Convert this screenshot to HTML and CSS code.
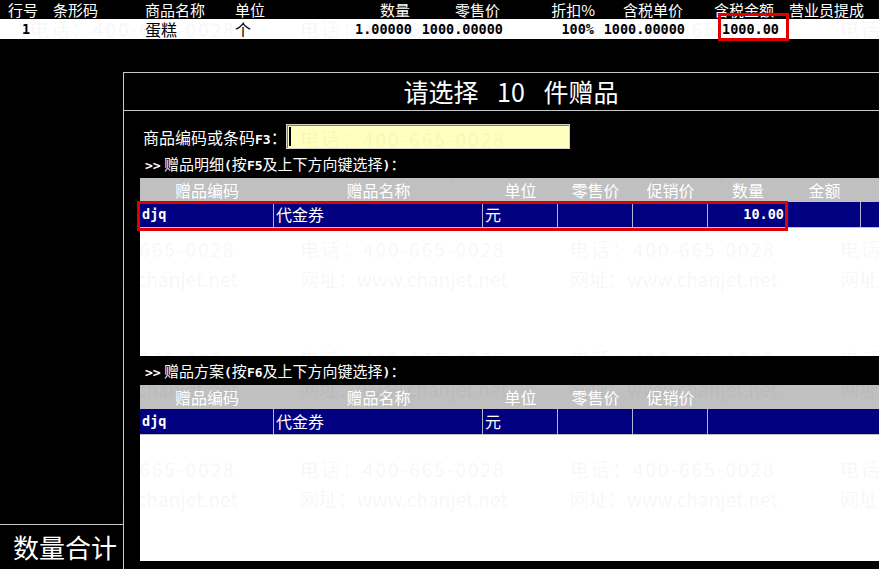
FILE: index.html
```html
<!DOCTYPE html>
<html lang="zh-CN">
<head>
    <meta charset="UTF-8"/>
    <meta name="viewport" content="width=device-width, initial-scale=1.0"/>
    <title>赠品选择</title>
    <link rel="stylesheet" href="styles.css">
</head>
<body>
    <div class="bill">
        <div class="bill-row bill-head">
            <span class="c-no">行号</span>
            <span class="c-code">条形码</span>
            <span class="c-name">商品名称</span>
            <span class="c-unit">单位</span>
            <span class="c-qty">数量</span>
            <span class="c-price">零售价</span>
            <span class="c-disc">折扣%</span>
            <span class="c-tax">含税单价</span>
            <span class="c-sum">含税金额</span>
            <span class="c-staff">营业员提成</span>
        </div>
        <div class="bill-row bill-line">
            <span class="c-no num">1</span>
            <span class="c-code"></span>
            <span class="c-name">蛋糕</span>
            <span class="c-unit">个</span>
            <span class="c-qty num">1.00000</span>
            <span class="c-price num">1000.00000</span>
            <span class="c-disc num">100%</span>
            <span class="c-tax num">1000.00000</span>
            <span class="c-sum num">1000.00<i class="mark mark-sum"></i></span>
            <span class="c-staff"></span>
        </div>
    </div>

    <div class="main">
        <div class="side">
            <div class="side-total">数量合计</div>
        </div>

        <div class="dialog">
            <div class="dialog-title">请选择 10 件赠品</div>
            <div class="dialog-body">
                <div class="field">
                    <label for="giftCode">商品编码或条码<b>F3</b>：</label>
                    <div class="field-input" id="giftCode"><span class="caret"></span></div>
                </div>

                <div class="section-label"><b>&gt;&gt;</b> 赠品明细<b>(</b>按<b>F5</b>及上下方向键选择<b>)</b>：</div>
                <div class="grid grid-detail">
                    <div class="grid-row grid-head">
                        <span>赠品编码</span>
                        <span>赠品名称</span>
                        <span>单位</span>
                        <span>零售价</span>
                        <span>促销价</span>
                        <span>数量</span>
                        <span>金额</span>
                        <span></span>
                    </div>
                    <div class="grid-row grid-item">
                        <span class="num">djq</span>
                        <span>代金券</span>
                        <span>元</span>
                        <span></span>
                        <span></span>
                        <span class="num right">10.00</span>
                        <span></span>
                        <span></span>
                    </div>
                    <i class="mark mark-row"></i>
                </div>

                <div class="section-label"><b>&gt;&gt;</b> 赠品方案<b>(</b>按<b>F6</b>及上下方向键选择<b>)</b>：</div>
                <div class="grid grid-plan">
                    <div class="grid-row grid-head">
                        <span>赠品编码</span>
                        <span>赠品名称</span>
                        <span>单位</span>
                        <span>零售价</span>
                        <span>促销价</span>
                        <span class="wide"></span>
                    </div>
                    <div class="grid-row grid-item">
                        <span class="num">djq</span>
                        <span>代金券</span>
                        <span>元</span>
                        <span></span>
                        <span></span>
                        <span class="wide"></span>
                    </div>
                </div>
            </div>
        </div>
    </div>

    <div class="watermark" id="watermark"></div>

    <script>
    // 水印平铺 4 列 x 5 行
    var wm = document.getElementById("watermark");
    for (var i = 0; i < 20; i++) {
        wm.innerHTML += '<div class="wm-cell"><div class="wm-tel">电话：400-665-0028</div><div>网址：www.chanjet.net</div></div>';
    }
    </script>
</body>
</html>
```

FILE: styles.css
```css
body {
    margin: 0;
    padding: 0;
    width: 879px;
    height: 569px;
    overflow: hidden;
    position: relative;
    background: #000;
    color: #fff;
    font-family: "Noto Sans CJK SC", sans-serif;
}
b {
    font-weight: bold;
    font-family: "DejaVu Sans Mono", monospace;
    font-size: 13px;
}
.num {
    font-family: "DejaVu Sans Mono", monospace;
    font-weight: bold;
    font-size: 13.5px;
}

/* 销售单表头和当前行 */
.bill-row {
    display: grid;
    grid-template-columns: 45px 95px 90px 70px 115px 90px 92px 91px 94px 1fr;
    white-space: nowrap;
}
.bill-head {
    height: 19px;
    line-height: 19px;
    font-size: 15px;
}
.bill-line {
    height: 20px;
    line-height: 20px;
    font-size: 16px;
    background: #fff;
    color: #000;
}
.bill-head .c-no,
.bill-head .c-code {
    padding-left: 8px;
}
.c-name,
.c-unit {
    padding-left: 5px;
}
.c-qty,
.c-price,
.c-disc,
.c-tax {
    text-align: right;
}
.bill-head .c-qty,
.bill-head .c-price,
.bill-head .c-tax {
    padding-right: 5px;
}
.bill-head .c-disc {
    padding-right: 2px;
}
.bill-head .c-sum {
    padding-left: 26px;
}
.c-staff {
    padding-left: 7px;
}
.bill-line .c-no {
    padding-left: 22px;
}
.bill-line .c-qty,
.bill-line .c-disc,
.bill-line .c-tax {
    padding-right: 3px;
}
.bill-line .c-price {
    padding-right: 2px;
}
.bill-line .c-sum {
    position: relative;
    padding-left: 34px;
}

/* 红色选中框 */
.mark {
    position: absolute;
    box-sizing: border-box;
    border: 3px solid #e00000;
    pointer-events: none;
}
.mark-sum {
    left: 30px;
    top: -6px;
    width: 71px;
    height: 28px;
}
.mark-row {
    left: -3px;
    top: 23px;
    width: 651px;
    height: 30px;
}

.main {
    display: flex;
    height: 530px;
}
.side {
    width: 123px;
    flex: none;
    display: flex;
    flex-direction: column;
    justify-content: flex-end;
}
.side-total {
    height: 44px;
    line-height: 44px;
    border-top: 1px solid #c8c8c8;
    padding-left: 13px;
    font-size: 26px;
}

.dialog {
    width: 780px;
    flex: none;
    margin-top: 33px;
    border-top: 1px solid #c8c8c8;
    border-left: 1px solid #c8c8c8;
}
.dialog-title {
    height: 37px;
    line-height: 37px;
    border-bottom: 1px solid #c8c8c8;
    text-align: center;
    font-size: 25px;
    word-spacing: 13px;
    padding-right: 6px;
}
.dialog-body {
    padding: 0 16px;
    display: flex;
    flex-direction: column;
}

.field {
    display: flex;
    align-items: center;
    margin-top: 13px;
    height: 25px;
}
.field label {
    width: 146px;
    padding-left: 3px;
    box-sizing: border-box;
    font-size: 16px;
    white-space: nowrap;
}
.field-input {
    width: 284px;
    height: 25px;
    box-sizing: border-box;
    display: flex;
    align-items: center;
    background: #ffffc0;
    border: 1px solid #d4d0c8;
    box-shadow: inset 1px 1px 0 #808080;
}
.caret {
    width: 2px;
    height: 19px;
    margin-left: 2px;
    background: #000;
}

.section-label {
    height: 29px;
    line-height: 29px;
    padding-left: 5px;
    font-size: 15px;
    white-space: nowrap;
}

/* 赠品表格 */
.grid {
    position: relative;
    background: #fff;
}
.grid-detail {
    height: 178px;
}
.grid-plan {
    height: 176px;
}
.grid-row {
    display: grid;
    grid-template-columns: 134px 209px 75px 75px 75px 80px 73px 1fr;
    white-space: nowrap;
}
.grid-plan .grid-row {
    grid-template-columns: 134px 209px 75px 75px 75px 1fr;
}
.grid-head {
    height: 24px;
    line-height: 24px;
    background: #c0c0c0;
    font-size: 16px;
    text-align: center;
}
.grid-item {
    height: 25px;
    line-height: 25px;
    background: #000080;
    border-bottom: 1px solid #c0c0c0;
    font-size: 16px;
}
.grid-item span {
    border-right: 1px solid #b4b4d4;
    padding-left: 2px;
}
.grid-item span:last-child,
.grid-item .wide {
    border-right: none;
}
.grid-item .right {
    text-align: right;
    padding-right: 3px;
}

/* 水印 */
.watermark {
    position: absolute;
    left: 0;
    top: 0;
    right: 0;
    bottom: 0;
    pointer-events: none;
    display: grid;
    grid-template-columns: repeat(4, 270px);
    grid-auto-rows: 110px;
    padding: 14px 0 0 30px;
    color: rgba(0, 0, 0, 0.055);
    font-size: 19px;
    line-height: 30px;
    white-space: nowrap;
    overflow: hidden;
}
.wm-tel {
    letter-spacing: 2px;
}
```
